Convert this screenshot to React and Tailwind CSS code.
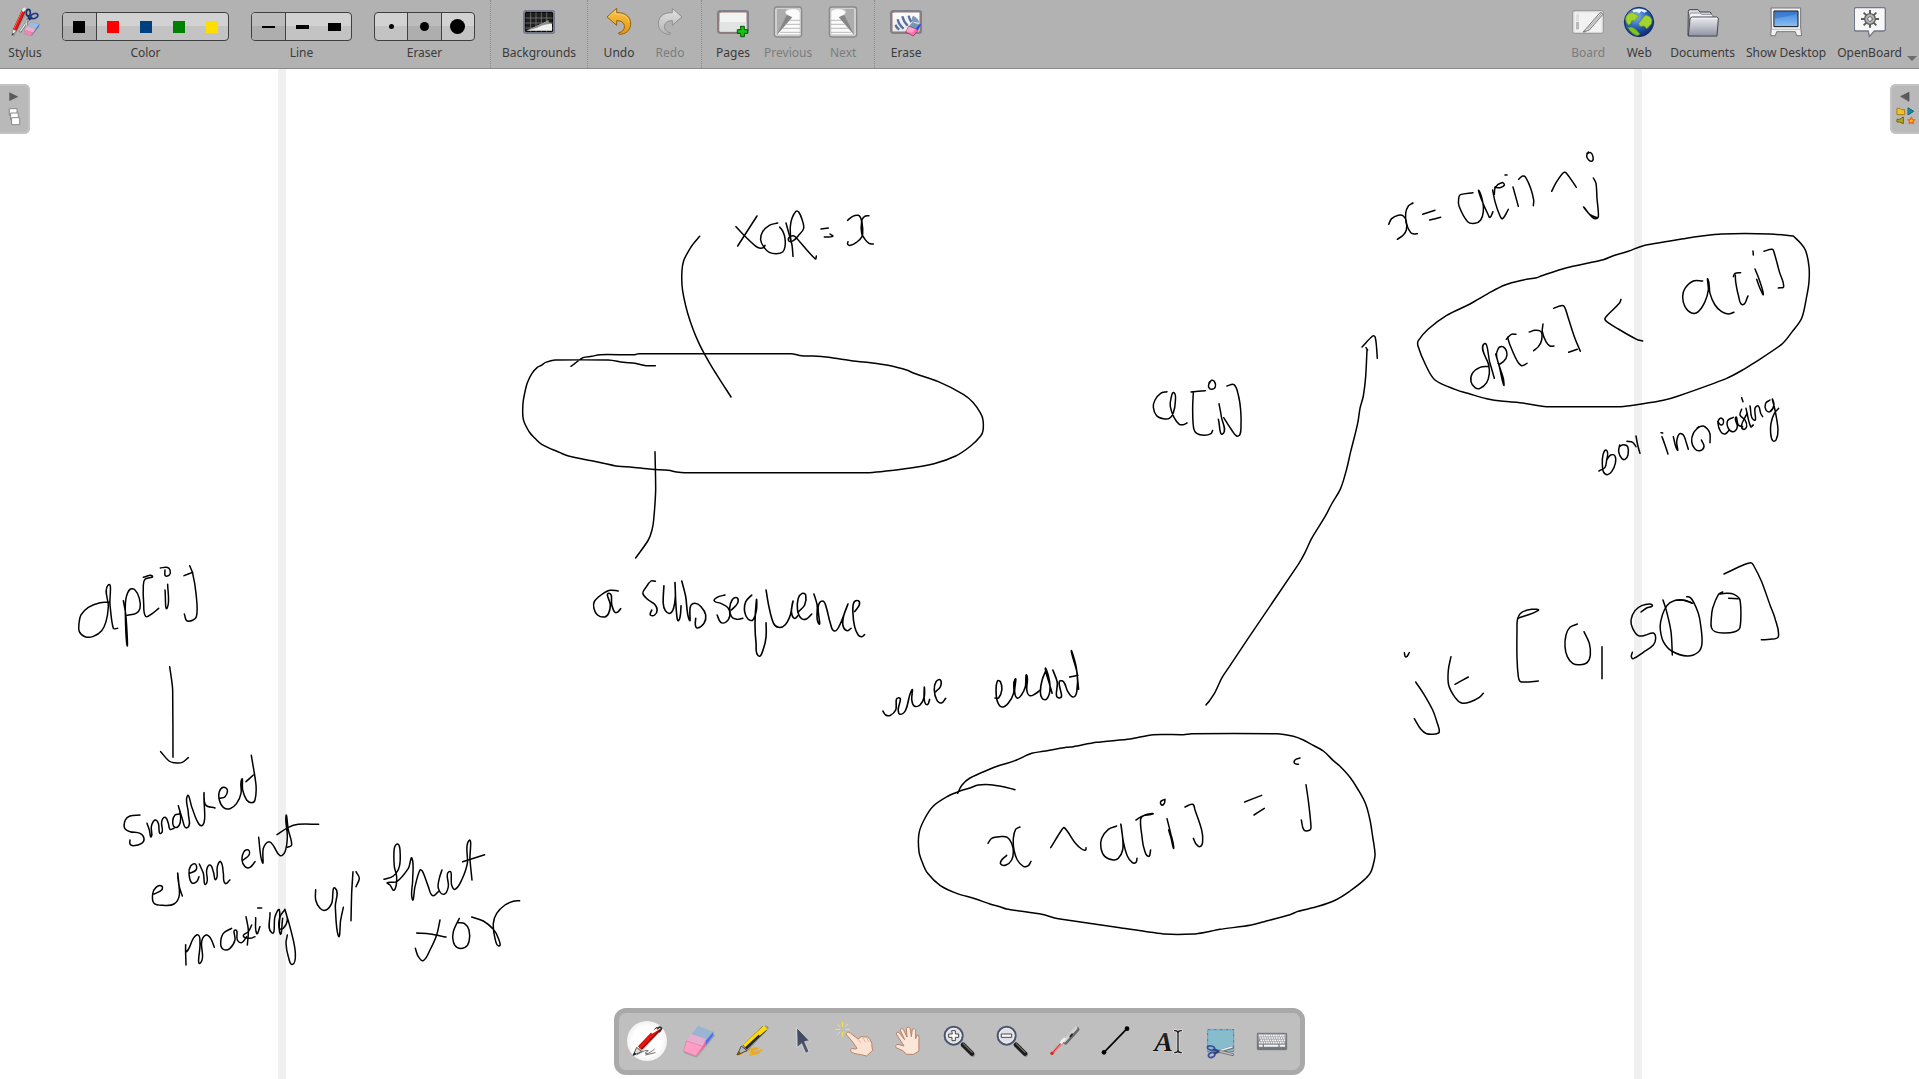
import React from "react";

/* ---------- toolbar icons ---------- */

function Icon({ box, size = "h-8 w-8", children }) {
  return (
    <svg viewBox={box} className={size + " shrink-0"} aria-hidden="true" fill="none" strokeLinejoin="round" strokeLinecap="round">
      {children}
    </svg>
  );
}

function Gradients() {
  const defs = [
    ["gold", "#f9c54a", "#e8940c"],
    ["silver", "#e2e2e2", "#b4b4b4"],
    ["paper", "#ffffff", "#e4e8e6"],
    ["folder", "#eceef2", "#9195a3"],
    ["screen", "#3d82d8", "#8cc0f5"],
    ["ink", "#333333", "#050505"],
    ["arrow", "#3c4258", "#505a76"],
    ["keys", "#a9abb2", "#6f7178"],
  ];
  return (
    <svg className="absolute h-0 w-0" aria-hidden="true">
      <defs>
        {defs.map(([id, a, b]) => (
          <linearGradient key={id} id={id} x1="0" y1="0" x2="0" y2="1">
            <stop offset="0" stopColor={a} />
            <stop offset="1" stopColor={b} />
          </linearGradient>
        ))}
        <radialGradient id="globe" cx="0.4" cy="0.3" r="0.75">
          <stop offset="0" stopColor="#8cb8f0" />
          <stop offset="0.5" stopColor="#2a62bd" />
          <stop offset="1" stopColor="#0a2566" />
        </radialGradient>
      </defs>
    </svg>
  );
}

const StylusIcon = () => (
  <Icon box="27 18 96 96">
    <path d="M40 106 L77 40" stroke="#8d8d8d" strokeWidth="7" opacity="0.6" />
    <path d="M45 89 L70 35" stroke="#8f1414" strokeWidth="12" />
    <path d="M45 88 L69 35" stroke="#e21a12" strokeWidth="9" />
    <path d="M43 84 L66 34" stroke="#ff8b7c" strokeWidth="2" />
    <path d="M70 31 l3 -4" stroke="#ececec" strokeWidth="8" />
    <path d="M36 105 L39 88 L49 92 Z" fill="#eeeeee" stroke="#777" strokeWidth="2" />
    <path d="M35 107 l3 -8 4 2 Z" fill="#222" />
    <path d="M62 94 L87 56" stroke="#666" strokeWidth="7" />
    <path d="M62 93 L87 56" stroke="#f0f0f0" strokeWidth="4" />
    <path d="M77 93 L82 58" stroke="#777" strokeWidth="6" />
    <path d="M77 92 L81 60" stroke="#dddddd" strokeWidth="3" />
    <ellipse cx="85" cy="38" rx="6" ry="10" stroke="#1c2e73" strokeWidth="5" />
    <ellipse cx="103" cy="48" rx="11" ry="7" stroke="#233b8a" strokeWidth="5" transform="rotate(-22 103 48)" />
    <path d="M85 48 L88 58 L95 54" stroke="#1c2e73" strokeWidth="6" />
    <path d="M91 68 L120 73 L96 109 L74 100 Z" fill="#828282" opacity="0.5" />
    <path d="M94 66 L118 72 L107 87 L83 79 Z" fill="#9dbde0" stroke="#7e9cc6" />
    <path d="M83 79 L107 87 L99 98 L75 91 Z" fill="#f3abcc" />
    <path d="M75 91 L99 98 L92 107 L73 101 Z" fill="#f285b6" stroke="#cf6696" />
    <path d="M107 87 L118 72 L117 80 L93 108 Z" fill="#4e78d6" />
  </Icon>
);

const BackgroundsIcon = () => (
  <Icon box="129 18 96 96">
    <rect x="131" y="32" width="93" height="68" rx="5" fill="#8b90a3" stroke="#6f7488" strokeWidth="3" />
    <rect x="136" y="37" width="82" height="58" rx="3" fill="#1e1e1e" stroke="#000" strokeWidth="3" />
    <path d="M137 54 H217 M137 69 H217 M137 84 H217 M152 38 V94 M168 38 V94 M184 38 V94 M200 38 V94" stroke="#8a8a8a" strokeWidth="2" />
    <path d="M139 92 Q160 84 176 75 Q194 69 205 61 Q202 70 216 71 V92 Z" fill="#f0f0f0" />
    <path d="M139 92 Q160 82 176 75 Q194 69 205 61 Q203 69 214 71 Q188 72 172 83 Z" fill="#8c8c8c" />
  </Icon>
);

const backArrow = "M376 50 L404 25 V38 C434 37 447 54 446 73 C445 91 431 103 412 103 L409 99 C423 95 429 87 427 76 C425 66 416 62 404 62 V75 Z";

const UndoIcon = () => (
  <Icon box="363 18 96 96">
    <path d={backArrow} fill="url(#gold)" stroke="#8f6214" strokeWidth="3" />
    <path d="M381 50 L401 32 V42 C425 41 438 50 441 66" stroke="#fbdc8a" strokeWidth="2" />
  </Icon>
);

const RedoIcon = () => (
  <Icon box="363 18 96 96">
    <g transform="translate(822 0) scale(-1 1)">
      <path d={backArrow} fill="url(#silver)" stroke="#8f8f8f" strokeWidth="3" />
    </g>
  </Icon>
);

const PagesIcon = () => (
  <Icon box="708 18 96 96">
    <rect x="710" y="32" width="93" height="68" rx="6" fill="#7f8496" stroke="#777b8c" strokeWidth="3" />
    <rect x="714" y="36" width="84" height="60" rx="4" fill="#f2f4f3" stroke="#a07468" strokeWidth="3" />
    <path d="M716 66 H796 V95 H716 Z" fill="#e2e4e3" />
    <path d="M779 79 h11 v10 h10 v11 h-10 v10 h-11 v-10 h-10 v-11 h10 Z" fill="#12c912" stroke="#054d05" strokeWidth="3" />
  </Icon>
);

const PageCurl = () => (
  <>
    <rect x="880" y="21" width="82" height="90" rx="8" fill="#d0d0d0" stroke="#8b8b8b" strokeWidth="4" />
    <path d="M888 27 H918 Q908 36 918 43 L933 52 L888 104 Z" fill="#adadad" />
    <path d="M918 30 Q938 22 952 30 Q958 32 957 40 V104 H888 L933 52 L917 44 Q908 36 918 30 Z" fill="#fbfbfb" stroke="#9f9f9f" strokeWidth="1" />
    <path d="M888 104 L917 45 L933 52 Z" fill="#868686" />
    <path d="M925 61 H956 M917 73 H956 M907 85 H956 M899 97 H956" stroke="#9a9a9a" strokeWidth="2" />
  </>
);

const PreviousIcon = () => (
  <Icon box="873 18 96 96">
    <PageCurl />
  </Icon>
);

const NextIcon = () => (
  <Icon box="873 18 96 96">
    <g transform="translate(1842 0) scale(-1 1)">
      <PageCurl />
    </g>
  </Icon>
);

const EraseIcon = () => (
  <Icon box="1227 18 96 96">
    <rect x="1229" y="32" width="93" height="68" rx="6" fill="#7f8496" stroke="#777b8c" strokeWidth="3" />
    <rect x="1233" y="36" width="84" height="60" rx="4" fill="url(#paper)" stroke="#a07468" strokeWidth="3" />
    <path d="M1244 74 Q1246 84 1255 88 M1250 58 Q1254 76 1268 86 M1264 49 Q1268 66 1280 77 M1283 47 Q1284 56 1291 66" stroke="#586f9f" strokeWidth="7" strokeLinecap="butt" />
    <path d="M1296 47 Q1312 54 1315 68 L1295 66 Q1289 58 1296 47 Z" fill="#8197bb" />
    <path d="M1294 69 L1320 72 L1299 104 L1280 100 Z" fill="#777" opacity="0.6" />
    <path d="M1294 66 L1313 75 L1304 87 L1284 79 Z" fill="#7098b8" />
    <path d="M1313 75 L1321 71 L1313 88 L1297 108 L1292 103 Z" fill="#234ee8" />
    <path d="M1284 79 L1306 87 L1312 90 L1297 108 L1275 97 Z" fill="#ff6daf" stroke="#8a315c" strokeWidth="2" />
    <path d="M1284 80 L1303 87 L1293 99 L1276 94 Z" fill="#ffa4ce" />
  </Icon>
);

const BoardIcon = () => (
  <Icon box="99 18 96 96">
    <rect x="101" y="32" width="92" height="68" rx="6" fill="#e5e5e5" stroke="#949494" strokeWidth="3" />
    <rect x="108" y="38" width="79" height="57" rx="2" fill="#f2f2f2" />
    <rect x="111" y="42" width="9" height="22" fill="#dedede" />
    <rect x="111" y="66" width="9" height="22" fill="#b8b8b8" />
    <path d="M137 96 L187 42" stroke="#999" strokeWidth="7" opacity="0.5" />
    <path d="M143 84 L183 38 Q190 36 191 44 L151 90 L133 96 Z" fill="#dcdcdc" stroke="#7b7b7b" strokeWidth="3" />
    <path d="M147 86 L186 42" stroke="#a8a8a8" strokeWidth="3" />
  </Icon>
);

const WebIcon = () => (
  <Icon box="252 18 96 96">
    <circle cx="300" cy="66" r="44" fill="url(#globe)" stroke="#12296b" strokeWidth="3" />
    <path d="M280 31 Q300 21 325 33 L316 38 L307 33 L301 40 L291 35 L284 38 Z" fill="#eef4ff" />
    <path d="M262 49 Q270 36 282 38 L292 44 L300 49 L293 54 L287 63 L279 61 L275 70 L269 76 L263 68 L260 58 Z" fill="#a3d42e" stroke="#5d9d1c" strokeWidth="2" />
    <path d="M313 52 L321 45 L333 50 L339 60 L337 72 L329 80 L323 86 L316 78 L302 79 L299 70 L306 62 Z" fill="#a3d42e" stroke="#5d9d1c" strokeWidth="2" />
    <path d="M266 82 L279 81 L290 88 L303 102 L295 107 Q277 103 266 82 Z" fill="#80c327" stroke="#4f8c1c" strokeWidth="2" />
  </Icon>
);

const DocumentsIcon = () => (
  <Icon box="441 18 96 96">
    <path d="M444 105 L445 34 Q445 29 450 29 H474 L480 36 H509 Q514 37 514 42 V100 Z" fill="#dddee2" stroke="#3d3f48" strokeWidth="3" />
    <path d="M448 104 L449 43 Q450 39 454 39 H479 L485 43 H514 Q519 44 519 49 V102 Z" fill="#f3f3f5" stroke="#60636e" strokeWidth="2" />
    <path d="M445 107 L450 57 Q451 51 458 51 H487 L497 51 H530 Q535 52 535 57 L531 107 Z" fill="url(#folder)" stroke="#44464f" strokeWidth="3" />
    <path d="M455 55 H531" stroke="#fff" strokeWidth="2" />
  </Icon>
);

const DesktopIcon = () => (
  <Icon box="690 18 96 96">
    <path d="M694 24 H782 V84 L785 107 H770 L766 95 H710 L706 107 H692 L694 84 Z" fill="#f2f2f2" stroke="#74767d" strokeWidth="3" />
    <rect x="703" y="33" width="71" height="47" fill="url(#screen)" stroke="#0e0e10" strokeWidth="3" />
    <path d="M704 56 Q738 50 773 42 V34 H704 Z" fill="#2b65c0" opacity="0.45" />
    <path d="M697 88 H780" stroke="#c7c8cc" strokeWidth="4" />
  </Icon>
);

const GearBubbleIcon = () => (
  <Icon box="939 18 96 96">
    <path d="M945 23 H1028 Q1033 23 1033 28 V88 Q1033 93 1028 93 H1000 L985 110 L982 93 H945 Q940 93 940 88 V28 Q940 23 945 23 Z" fill="#f7f7f7" stroke="#72778a" strokeWidth="4" />
    <g stroke="#5c5c5c" strokeWidth="6" strokeLinecap="butt">
      <path d="M987 30 V83 M960 57 H1014 M968 38 L1006 76 M1006 38 L968 76" />
    </g>
    <circle cx="987" cy="57" r="16" fill="#b5b5b5" stroke="#5c5c5c" strokeWidth="4" />
    <circle cx="987" cy="57" r="7" fill="#f1f1f1" stroke="#6a6a6a" strokeWidth="3" />
  </Icon>
);

/* ---------- floating palette icons ---------- */

const PenTool = () => (
  <>
    <path d="M84 164 Q112 147 118 152 Q99 163 118 160 Q134 150 136 148 M110 165 L138 158" stroke="#707070" strokeWidth="3" />
    <path d="M95 148 L152 87" stroke="#3f3f3f" strokeWidth="14" opacity="0.35" />
    <path d="M93 144 L149 86" stroke="#7d0b0b" strokeWidth="16" strokeLinecap="butt" />
    <path d="M92 143 L148 85" stroke="#e8130e" strokeWidth="11" strokeLinecap="butt" />
    <path d="M130 97 L150 85" stroke="#fff" strokeWidth="7" />
    <path d="M146 86 Q153 77 158 85 L152 95" stroke="#2c2c2c" strokeWidth="5" />
    <path d="M73 165 L83 142 L97 154 Z" fill="#d9d9d9" stroke="#555" strokeWidth="3" />
    <path d="M71 167 l5 -10 6 5 Z" fill="#111" />
  </>
);

const EraserTool = () => (
  <>
    <path d="M228 158 L262 170 L315 106" stroke="#777" strokeWidth="6" opacity="0.4" />
    <path d="M268 77 L313 95 L295 123 L247 102 Z" fill="#9bb4d1" />
    <path d="M313 95 L313 106 L291 135 L288 122 L295 116 Z" fill="#4774ea" />
    <path d="M247 102 L293 118 L281 139 L233 123 Z" fill="#e8aecf" />
    <path d="M281 139 L291 118 L290 136 L261 168 Z" fill="#f7609d" />
    <path d="M233 123 L281 139 L261 168 L225 154 Z" fill="#ff9dc4" stroke="#e277a2" strokeWidth="2" />
  </>
);

const HighlighterTool = () => (
  <>
    <path d="M390 164 Q432 140 447 145 Q413 157 431 158 Q452 154 458 151 M423 165 L450 159" stroke="#eda91f" strokeWidth="5" />
    <path d="M411 148 L471 84" stroke="#4b4b4b" strokeWidth="14" opacity="0.35" />
    <path d="M407 142 L467 85" stroke="#26282c" strokeWidth="18" strokeLinecap="butt" />
    <path d="M405 138 L468 80" stroke="#ffd90a" strokeWidth="10" strokeLinecap="butt" />
    <path d="M449 104 L472 84" stroke="#ffd90a" strokeWidth="9" strokeLinecap="butt" />
    <path d="M385 164 L397 138 L413 151 Z" fill="#b5b5b5" stroke="#4c4c4c" strokeWidth="3" />
    <path d="M382 165 l7 -12 8 9 Z" fill="#6b5310" />
  </>
);

const PointerTool = () => (
  <path d="M564 84 L601 122 L587 125 L600 155 L590 160 L578 131 L565 142 Z" fill="url(#arrow)" stroke="#e6e6e6" strokeWidth="2" />
);

const PlayTool = () => (
  <>
    <path d="M698 66 V81 M698 96 V110 M676 88 H690 M706 88 H720 M682 72 L690 80 M706 96 L713 103 M714 72 L706 80 M690 96 L682 104" stroke="#ffe733" strokeWidth="3" strokeLinecap="butt" />
    <path d="M709 99 Q714 92 721 99 L744 117 Q753 106 764 111 Q774 106 780 119 Q788 129 786 141 L788 151 L770 168 Q751 163 735 161 Q720 158 721 149 Q723 143 736 147 L741 145 L728 126 L710 105 Z" fill="#fbe2d3" stroke="#b58469" strokeWidth="3" />
    <path d="M744 117 L752 128 M759 114 L766 126 M771 115 L776 125" stroke="#cf9f84" strokeWidth="2" />
  </>
);

const HandTool = () => (
  <path d="M874 89 Q877 81 883 88 L894 111 L892 85 Q898 77 904 85 L907 110 L910 88 Q916 82 920 90 L920 116 L924 105 Q931 103 930 112 Q929 133 930 153 L914 163 L893 163 Q886 151 861 143 Q857 135 867 133 L885 138 L862 102 Q862 93 870 98 L886 118 Z" fill="#fbe6da" stroke="#b58469" strokeWidth="3" />
);

const Lens = ({ plus }) => (
  <>
    <path d="M42 136 L72 165" stroke="#777" strokeWidth="13" opacity="0.5" />
    <path d="M34 128 L42 136" stroke="#d5d5d5" strokeWidth="7" />
    <path d="M42 134 L69 161" stroke="#1d1d1d" strokeWidth="14" />
    <path d="M43 131 L69 157" stroke="#676767" strokeWidth="4" />
    <circle cx="14" cy="107" r="27" fill="#dfe1e6" stroke="#4c556f" strokeWidth="6" />
    <circle cx="14" cy="107" r="22" stroke="#f6f6f6" strokeWidth="2" />
    {plus ? (
      <path d="M9 92 h10 v10 h10 v10 h-10 v10 h-10 v-10 h-10 v-10 h10 Z" fill="#fff" stroke="#484848" strokeWidth="3" />
    ) : (
      <rect x="-1" y="102" width="30" height="10" fill="#fff" stroke="#484848" strokeWidth="3" />
    )}
  </>
);

const LaserTool = () => (
  <>
    <path d="M307 160 L344 120" stroke="#ef4136" strokeWidth="9" opacity="0.35" />
    <path d="M307 159 L336 126" stroke="#e32a20" strokeWidth="3" />
    <circle cx="306" cy="160" r="5" fill="#d6281f" />
    <path d="M346 126 L381 88" stroke="#696969" strokeWidth="15" />
    <path d="M343 123 L378 84" stroke="#d3d3d3" strokeWidth="9" />
    <path d="M334 127 L343 117" stroke="#efefef" strokeWidth="9" />
    <path d="M361 109 L366 103" stroke="#2b2b2b" strokeWidth="6" />
  </>
);

const LineTool = () => (
  <>
    <path d="M462 157 L531 86" stroke="#000" strokeWidth="5" />
    <circle cx="462" cy="157" r="7" fill="#000" />
    <circle cx="531" cy="86" r="7" fill="#000" />
  </>
);

const TextTool = () => (
  <>
    <text x="613" y="154" fontSize="84" fontWeight="bold" fontStyle="italic" fontFamily="Liberation Serif, serif" fill="url(#ink)" stroke="#e9e9e9" strokeWidth="2" paintOrder="stroke">A</text>
    <path d="M674 92 Q683 91 684 99 Q685 91 694 92 M684 97 V151 M674 158 Q684 158 684 151 Q685 158 694 158" stroke="#e9e9e9" strokeWidth="8" />
    <path d="M674 92 Q683 91 684 99 Q685 91 694 92 M684 97 V151 M674 158 Q684 158 684 151 Q685 158 694 158" stroke="#161616" strokeWidth="4" />
  </>
);

const CaptureTool = () => (
  <>
    <rect x="773" y="89" width="78" height="66" fill="#86bccc" stroke="#2a7ceb" strokeWidth="3" strokeDasharray="9 3 3 3" strokeLinecap="butt" />
    <path d="M796 158 L847 142" stroke="#6e6e6e" strokeWidth="9" />
    <path d="M797 156 L846 141" stroke="#ececec" strokeWidth="5" />
    <path d="M796 151 L848 164" stroke="#6e6e6e" strokeWidth="8" />
    <path d="M797 151 L847 163" stroke="#c5c5c5" strokeWidth="4" />
    <ellipse cx="783" cy="144" rx="11" ry="6" stroke="#3d4f9b" strokeWidth="5" transform="rotate(12 783 144)" />
    <ellipse cx="785" cy="165" rx="10" ry="7" stroke="#3d4f9b" strokeWidth="5" transform="rotate(-24 785 165)" />
    <path d="M793 148 L806 154 L794 160" stroke="#2f407f" strokeWidth="6" />
  </>
);

const KeyboardTool = () => (
  <>
    <rect x="922" y="100" width="88" height="49" rx="2" fill="url(#keys)" stroke="#70727a" strokeWidth="3" />
    <path d="M927 107 H1005 M929 114 H1005 M931 121 H1005 M927 128 H1005" stroke="#f6f6f6" strokeWidth="5" strokeDasharray="5 2" strokeLinecap="butt" />
    <path d="M927 137 H938 M942 137 H985 M989 137 H1005" stroke="#f6f6f6" strokeWidth="6" strokeLinecap="butt" />
  </>
);

const palette = [
  { name: "Pen", box: "54 63 120 120", draw: <PenTool />, active: true },
  { name: "Eraser", box: "210 63 120 120", draw: <EraserTool /> },
  { name: "Highlighter", box: "366 63 120 120", draw: <HighlighterTool /> },
  { name: "Select", box: "522 63 120 120", draw: <PointerTool /> },
  { name: "Interact", box: "675 63 120 120", draw: <PlayTool /> },
  { name: "Scroll page", box: "834 63 120 120", draw: <HandTool /> },
  { name: "Zoom in", box: "-30 63 120 120", draw: <Lens plus /> },
  { name: "Zoom out", box: "-30 63 120 120", draw: <Lens /> },
  { name: "Laser pointer", box: "282 63 120 120", draw: <LaserTool /> },
  { name: "Draw line", box: "438 63 120 120", draw: <LineTool /> },
  { name: "Write text", box: "594 63 120 120", draw: <TextTool /> },
  { name: "Capture", box: "750 63 120 120", draw: <CaptureTool /> },
  { name: "Virtual keyboard", box: "906 63 120 120", draw: <KeyboardTool /> },
];

/* ---------- top bar parts ---------- */

function ToolButton({ label, icon, disabled }) {
  return (
    <button
      type="button"
      disabled={disabled}
      className={"flex min-w-10 flex-col items-center gap-[7px] pt-1.5 leading-4 whitespace-nowrap " + (disabled ? "text-[#7c7c7c]" : "text-[#3a3a3a]")}
    >
      {icon}
      <span>{label}</span>
    </button>
  );
}

const Separator = () => <div className="h-full w-px border-l border-dotted border-[#8c8c8c]" />;

const lightFace = "bg-linear-to-b from-[#d2d2d2] from-50% to-[#c3c3c3] to-50%";
const darkFace = "bg-linear-to-b from-[#bcbcbc] from-50% to-[#aeaeae] to-50%";

function Segmented({ label, width, items, selected }) {
  return (
    <div className="flex flex-col items-center gap-1 pt-3 leading-4" role="group" aria-label={label}>
      <div className={"flex h-[29px] overflow-hidden rounded-sm border border-[#404040] " + width + " " + lightFace}>
        {items.map((item, i) => (
          <button
            key={item.name}
            type="button"
            aria-label={item.name}
            aria-pressed={i === selected}
            className={
              "flex flex-1 items-center justify-center border-[#404040] " +
              (i === selected ? darkFace + " border-r " + (i > 0 ? "border-l" : "") : "")
            }
          >
            <span className={item.look} />
          </button>
        ))}
      </div>
      <span className="text-[#3a3a3a]">{label}</span>
    </div>
  );
}

const colors = [
  { name: "Black", look: "h-3 w-3 bg-black" },
  { name: "Red", look: "h-3 w-3 bg-[#ff0000]" },
  { name: "Blue", look: "h-3 w-3 bg-[#004080]" },
  { name: "Green", look: "h-3 w-3 bg-[#008000]" },
  { name: "Yellow", look: "h-3 w-3 bg-[#ffdd00]" },
];
const lines = [
  { name: "Thin line", look: "h-0.5 w-[13px] bg-black" },
  { name: "Medium line", look: "h-1 w-[13px] bg-black" },
  { name: "Thick line", look: "h-2 w-[13px] bg-black" },
];
const erasers = [
  { name: "Small eraser", look: "h-[5px] w-[5px] rounded-full bg-black" },
  { name: "Medium eraser", look: "h-[9px] w-[9px] rounded-full bg-black" },
  { name: "Large eraser", look: "h-[15px] w-[15px] rounded-full bg-black" },
];

/* ---------- board ink ---------- */

// Each note holds freehand strokes as point lists in its own local units.
const notes = [
  {
    name: "XOR = x",
    at: "translate(500 190) scale(0.33333)",
    strokes: [
      "599,139 578,164 560,193 551,212 546,240 546,285 551,320 563,370 580,420 597,460 614,493 640,538 693,621",
      "213,529 224,521 249,503 275,499 300,494 405,494 416,491 872,491 905,497 940,498 985,502 1060,513 1100,517 1175,528 1222,541 1240,549 1315,575 1390,613 1420,638 1442,670 1449,690 1449,722 1442,738 1412,768 1367,798 1302,821 1215,836 1100,848 555,848 530,846 505,841 455,838 390,831 355,829 275,812 208,799 180,788 125,763 105,745 88,726 70,688 69,640 75,605 82,578 96,550 112,532 124,526 137,517 165,510 325,510 370,517 405,520 438,527 466,527",
      "708,110 735,139 765,167 778,174 792,172 795,166",
      "771,78 713,168",
      "833,99 808,106 788,125 782,150 792,172 808,187 830,191 848,186 855,170 855,145 849,125 839,111",
      "858,99 868,135 876,165 879,199",
      "872,150 871,110 876,85 888,64 896,66 906,88 911,115 895,137 880,152 868,154 866,144 880,137 892,147 946,207 949,198",
      "963,117 985,114",
      "973,141 998,139 990,132",
      "1043,91 1058,79 1075,76 1083,86 1088,115 1086,140 1068,158 1052,166 1043,163 1044,155",
      "1107,77 1093,80 1085,93 1085,130 1095,148 1107,160 1120,162",
      "465,785 467,900 461,990 456,1020 445,1050 407,1104",
    ],
  },
  {
    name: "x = a[i] ^ j, dp[x] < a[i], for increasing",
    at: "translate(1340 130) scale(0.33333)",
    strokes: [
      "146,283 155,266 175,256 190,258 199,275 199,300 190,315 172,328",
      "219,219 205,228 197,250 199,280 212,308 222,312 232,311",
      "248,253 285,241",
      "269,270 302,262",
      "399,188 361,194 356,205 357,228 383,275 405,280 422,270 430,245 428,215 417,182 425,210 445,255 450,262 459,245",
      "463,193 466,172 485,158 493,165 480,173 464,172",
      "458,180 465,215 480,258 488,266 505,238",
      "519,171 535,229",
      "495,135 501,135",
      "536,148 548,138 557,142 572,175 581,210 580,227",
      "635,184 650,155 670,128 678,128 709,172",
      "745,66 740,78 746,90 757,93 759,80 752,68 741,70",
      "760,144 768,160 771,205 775,248 773,264 757,262 732,232 750,254 773,264",
      "1360,318 1290,312 1145,312 1080,319 1040,325 910,347 865,364 820,377 790,389 680,413 605,437 590,443 550,450 495,465 445,490 390,522 320,556 265,597 235,632 234,648 257,705 285,750 345,778 390,792 440,806 490,814 540,818 620,830 842,830 905,822 970,811 1015,798 1160,745 1215,716 1245,697 1325,643 1355,607 1385,565 1400,500 1407,455 1407,410 1397,362 1382,340 1360,318",
      "445,709 420,712 397,730 393,755 405,773 420,775 440,758 448,730 446,705 431,643 450,700 463,745",
      "467,672 478,710 491,765 490,745 470,680 475,655 488,650 500,665 498,685 480,702 474,700",
      "499,628 514,613 528,613",
      "503,622 508,640 530,690 545,707 561,700",
      "568,606 585,601 603,605 605,630 595,650 581,662",
      "609,582 607,605 618,635 630,648 642,648",
      "641,535 663,527 673,530 685,565 703,620 721,664",
      "686,667 712,658",
      "843,508 838,520 797,562 797,572 835,597 890,628 908,633",
      "1088,453 1060,453 1035,475 1028,500 1035,530 1055,549 1075,545 1095,515 1105,480 1104,448 1110,490 1125,525 1145,545 1165,552 1182,547",
      "1180,440 1185,430 1202,428",
      "1186,435 1187,455 1195,495 1208,524 1224,498",
      "1245,417 1258,450 1270,493 1260,475 1250,448",
      "1239,363 1240,375",
      "1272,364 1297,358 1303,370 1318,425 1331,470 1315,474",
      "777,1023 795,1012 800,990 803,970 797,960 789,975 787,1000 790,1025 802,1034 815,1025 826,1000 825,978 812,975 800,990",
      "839,945 836,965 845,985 855,988 864,975 863,950 850,944 838,950",
      "861,934 878,937 888,950",
      "888,918 893,945 900,970",
      "966,920 975,945 984,972",
      "963,908 968,909",
      "1000,920 1012,960 1010,935 1018,912 1030,915 1038,935 1045,958",
      "1077,890 1060,910 1055,935 1065,957 1080,962 1092,950 1084,930",
      "1072,893 1090,888 1103,898 1110,912 1110,938",
      "1133,875 1145,885 1150,870 1140,865 1134,880 1142,905 1155,912 1168,900",
      "1180,862 1163,872 1165,895 1180,905 1192,890 1187,862 1195,885 1208,890",
      "1205,838 1200,855 1215,870 1220,890 1210,898 1205,885 1215,862 1222,850",
      "1218,835 1232,890 1240,885",
      "1205,803 1209,815",
      "1230,828 1242,870 1245,835 1255,828 1262,850 1268,860",
      "1290,810 1277,820 1278,840 1290,845 1302,825 1297,808 1305,840 1314,900 1308,930 1298,932 1292,910 1293,880 1303,850 1316,835",
    ],
  },
  {
    name: "a[i]",
    at: "translate(1130 320) scale(0.33333)",
    strokes: [
      "111,215 92,220 75,240 70,262 80,287 100,296 118,295 130,278 136,245 132,218 123,235 121,260 132,292 148,313 160,314 171,309",
      "183,216 226,212",
      "190,215 188,270 191,325 200,340 222,346 243,341 248,331",
      "267,251 274,290 279,341 265,298",
      "281,293 305,330 320,348 330,343 333,320 332,270 325,225 312,194 291,198",
      "238,186 236,202 247,208 256,200 254,186 245,181 238,190",
      "228,1155 238,1143 255,1117 276,1073 300,1037 360,947 505,733 525,698 545,655 585,590 605,552 632,505 650,447 662,395 676,340 684,305 690,265 700,228 707,170 711,90",
      "696,81 728,48 735,50 739,75 742,115",
      "708,83 713,90",
    ],
  },
  {
    name: "j in [0, 500]",
    at: "translate(1380 540) scale(0.33333)",
    strokes: [
      "73,338 78,351 88,338",
      "107,426 130,460 158,510 172,550 178,575 170,581 140,581 122,567 103,536",
      "213,350 205,390 206,435 225,472 245,489 270,486 298,472 310,460",
      "225,433 265,411",
      "414,235 475,211 455,208 425,217 413,235 411,270 411,355 415,410 420,424 435,426 475,423",
      "592,252 570,262 558,285 555,320 562,350 578,370 600,374 622,367 631,345 628,310 612,275",
      "666,320 666,416",
      "783,216 800,204 817,198 810,192 785,197 765,212 753,240 758,265 775,287 795,286 820,279 827,295 820,315 790,337 760,356 754,350 757,337",
      "888,181 915,181 938,190",
      "935,188 900,179 870,188 853,210 842,245 841,270 850,305 875,333 922,348 955,336 966,310 962,255 955,220 940,185 930,172 920,170",
      "849,180 860,215 873,275 877,345",
      "1028,156 1015,164 998,205 994,235 994,262 1005,275 1030,279 1062,276 1080,262 1080,180 1062,163 1040,160 1018,162",
      "1046,175 1075,176",
      "1032,102 1090,75 1113,68 1120,75 1145,125 1170,195 1185,235 1195,290 1170,298 1144,299",
    ],
  },
  {
    name: "x ^ a[i] = j",
    at: "translate(900 700) scale(0.33333)",
    strokes: [
      "173,280 186,255 210,234 270,207 300,196 345,182 395,160 430,154 500,142 520,140 590,127 690,117 760,104 850,104 875,101 1130,101 1180,109 1210,120 1230,131 1270,153 1300,182 1320,199 1350,232 1375,270 1397,312 1410,360 1418,410 1425,460 1423,480 1412,517 1390,542 1350,573 1307,600 1255,619 1195,634 1170,644 1085,667 1050,676 960,688 925,695 880,702 795,702 660,683 475,656 425,643 320,627 300,620 270,612 225,596 170,580 120,556 83,520 68,490 57,455 57,400 72,360 98,320 145,288 178,274 210,264 235,255 270,254 310,260 345,269",
      "264,430 275,415 300,410 322,412 335,430 340,455 335,480 318,495 302,492 305,480 320,466",
      "360,381 347,388 340,415 342,450 352,480 370,499 385,497 393,484",
      "452,443 485,390 493,383 525,428 545,447 557,450 558,443",
      "650,378 625,388 605,415 603,445 615,470 640,480 655,475 668,450 668,415 663,375 670,425 682,468 697,488 708,487 711,475",
      "708,360 730,347 758,342 735,345 722,357 726,410 732,445 745,469 752,450",
      "801,356 812,400 821,443 812,410 806,390",
      "792,299 782,305 785,315 793,310 795,298",
      "855,321 878,313 885,330 905,390 908,425 900,440 888,432 880,415",
      "1034,306 1085,286",
      "1062,345 1093,325",
      "1200,174 1185,180 1184,190 1195,193",
      "1218,254 1226,310 1233,380 1230,390 1212,390 1204,360",
    ],
  },
  {
    name: "a subsequence, we want",
    at: "translate(560 540) scale(0.35714 0.33333)",
    strokes: [
      "163,153 140,151 115,165 96,185 95,205 105,225 125,231 136,220 141,195 137,160 145,195 152,215 160,217 170,206",
      "267,124 255,123 240,143 232,160 245,178 265,193 272,210 265,225 253,225 257,210",
      "291,137 289,190 295,212 308,220 318,205 323,170 322,130 324,185 328,235 332,242 337,225 339,197",
      "341,123 352,170 362,240 365,200 378,190 395,200 408,225 403,250 385,264 379,255 380,235",
      "462,165 440,172 432,183 450,190 470,203 476,225 465,246 450,247 440,225",
      "480,210 497,190 495,173 482,180 475,205 480,230 495,238 512,235",
      "537,165 520,185 517,215 527,238 540,240 550,210 550,180 546,250 549,310 556,348 570,325 577,290 577,248",
      "577,150 585,200 598,250 612,262 630,255 645,225 652,185 648,215 656,235 668,225",
      "668,215 685,195 688,165 678,160 667,175 665,210 675,235 690,237 705,222",
      "711,162 720,195 724,250 723,200 735,183 745,200 757,250 768,273 782,258 800,210 806,193 795,225 792,255 803,272 815,265",
      "825,215 838,195 835,182 823,187 820,215 825,260 835,285 845,290 853,284",
      "904,513 912,525 925,526 940,510 948,473 947,510 952,523 968,510 985,450 985,480 992,498 1008,495 1020,470 1020,443 1020,480 1028,494 1035,478",
      "1052,455 1065,440 1065,420 1053,425 1048,450 1055,480 1068,489 1080,475",
      "1218,474 1228,474 1237,450 1233,425 1225,423 1221,450 1225,485 1238,501 1255,490 1270,460 1274,418 1273,455 1280,474 1292,465 1303,440 1307,406 1307,450 1315,467 1330,462 1345,450",
      "1362,388 1350,420 1345,455 1350,475 1362,478 1372,450 1368,410 1359,386 1370,430 1378,460",
      "1380,390 1392,425 1398,474 1398,425 1410,425 1422,455 1437,471 1447,455 1448,400 1432,335 1445,380 1452,448",
      "1427,411 1450,406",
    ],
  },
  {
    name: "dp[i]: smallest element making up that xor",
    at: "translate(50 540) scale(0.33333)",
    strokes: [
      "178,187 150,188 115,202 93,225 87,250 88,275 105,290 130,289 155,272 168,245 175,200 174,136 180,195 190,265 203,265",
      "220,182 228,230 231,315 226,220 228,175 240,148 255,150 268,175 270,205 258,220 232,226",
      "280,112 307,108 285,118 280,135 281,190 287,229 305,222 326,205",
      "345,150 352,203 353,133",
      "331,84 350,82 360,90 358,105 346,107 345,90",
      "419,77 428,100 438,160 439,230 412,243 403,222",
      "402,107 428,97",
      "359,380 368,450 369,652",
      "332,635 357,663 372,668 395,668 415,653",
      "270,825 240,828 226,840 224,865 240,875 270,880 282,895 275,910 250,917 240,912 240,900",
      "291,850 298,870 304,890 304,860 315,840 325,850 333,880 335,845 345,832 355,850 360,868 372,865",
      "388,822 375,825 368,845 375,862 388,855 392,835 390,815",
      "385,797 395,830 412,863 415,820 412,768 425,800 440,840 455,857 464,835 462,760 467,795 495,804",
      "508,775 525,770 532,750 520,742 508,755 508,780 520,802 540,806 560,790 573,760 575,718 578,750 590,780 605,788 615,780 618,735 604,646",
      "588,725 610,705",
      "312,1062 335,1050 335,1038 318,1042 308,1062 312,1090 340,1096 372,1092 388,1065 383,1002 388,1040 397,1068",
      "418,1000 438,990 436,972 422,978 417,1000 425,1028 440,1025 447,1010",
      "448,972 460,1000 468,1032 470,990 480,975 490,995 498,1018 502,980 512,965 520,1000 525,1030 540,1020",
      "580,960 597,945 595,930 582,935 576,960 585,980 600,982 615,965",
      "626,892 637,967 640,925 657,905 672,920 690,947 705,935 712,890 708,828 715,870 725,915 712,922",
      "681,884 715,862 745,853 806,853",
      "408,1275 407,1215 410,1235 430,1195 445,1185 450,1210 452,1268 455,1205 468,1185 482,1195 493,1222",
      "545,1165 520,1180 512,1210 520,1228 540,1225 555,1200 556,1170 562,1200 575,1208 590,1190",
      "588,1130 595,1170 592,1215",
      "605,1155 595,1175 580,1188 600,1195 615,1190",
      "617,1133 620,1180 630,1160",
      "623,1104 635,1104",
      "660,1118 665,1178 675,1130 688,1110 690,1180 698,1135",
      "705,1108 690,1130 688,1165 700,1165 712,1140 705,1110 725,1180 736,1240 728,1273 715,1250 708,1210 712,1185",
      "797,1049 797,1080 810,1105 828,1110 845,1090 856,1045 856,1100 865,1187 872,1140 880,1102",
      "909,995 905,1060 903,1142",
      "918,995 928,1015 918,1040",
      "1002,1018 1030,1008 1048,980 1050,930 1043,912 1033,925 1033,980 1040,1010 1033,1050 1020,1035 1012,1028 1040,1025 1075,985 1086,955 1088,1020 1087,1078 1095,1040 1110,990 1118,995 1135,1040 1148,1067 1165,1055",
      "1176,990 1168,1015 1165,1045 1182,1063 1195,1040 1197,995 1205,1035 1215,1048 1235,1020 1252,970 1256,903 1260,960 1266,1020",
      "1238,965 1304,944",
      "1100,1179 1140,1182 1188,1191",
      "1170,1140 1160,1185 1140,1230 1120,1262 1105,1250 1096,1225",
      "1228,1135 1210,1175 1210,1205 1222,1223 1245,1222 1257,1205 1257,1170 1243,1150 1225,1148",
      "1265,1131 1300,1143 1330,1168 1345,1195 1347,1218 1335,1195 1330,1150 1340,1120 1365,1095 1390,1084 1409,1082",
    ],
  },
];

// Joins the points with cubic segments whose handles stay within a third of each segment.
function smooth(points) {
  const p = points.split(" ").map((s) => s.split(",").map(Number));
  const dir = p.map((_, i) => {
    const a = p[Math.max(0, i - 1)];
    const b = p[Math.min(p.length - 1, i + 1)];
    const len = Math.hypot(b[0] - a[0], b[1] - a[1]) || 1;
    return [(b[0] - a[0]) / len, (b[1] - a[1]) / len];
  });
  let d = "M" + p[0].join(" ");
  for (let i = 1; i < p.length; i++) {
    const [a, b] = [p[i - 1], p[i]];
    const gap = Math.hypot(b[0] - a[0], b[1] - a[1]);
    const h = Math.min(gap / 3, 20);
    const c = [a[0] + dir[i - 1][0] * h, a[1] + dir[i - 1][1] * h, b[0] - dir[i][0] * h, b[1] - dir[i][1] * h, b[0], b[1]];
    d += "C" + c.map((n) => n.toFixed(1)).join(" ");
  }
  return d;
}

function Board() {
  return (
    <svg viewBox="0 69 1919 1010" preserveAspectRatio="xMidYMid slice" className="absolute inset-0 h-full w-full" role="img" aria-label="Board page">
      <rect x="278" y="69" width="8" height="1010" fill="#f0f0f0" />
      <rect x="1634" y="69" width="8" height="1010" fill="#f0f0f0" />
      <g fill="none" stroke="#000" strokeWidth="4.5" strokeLinecap="round" strokeLinejoin="round">
        {notes.map((note) => (
          <g key={note.name} transform={note.at} aria-label={note.name}>
            {note.strokes.map((s, i) => (
              <path key={i} d={smooth(s)} />
            ))}
          </g>
        ))}
      </g>
    </svg>
  );
}

/* ---------- page ---------- */

export default function App() {
  return (
    <div className="flex h-screen flex-col overflow-hidden bg-white font-['Noto_Sans','Open_Sans',sans-serif] text-xs">
      <Gradients />
      <header className="flex h-[69px] shrink-0 items-start justify-between border-b border-[#8a8a8a] bg-[#b2b2b2]">
        <div className="flex h-full items-start gap-[11px] pl-[5px]">
          <ToolButton label="Stylus" icon={<StylusIcon />} />
          <div className="flex gap-[22px] pr-1 pl-1.5">
            <Segmented label="Color" width="w-[167px]" items={colors} selected={0} />
            <Segmented label="Line" width="w-[101px]" items={lines} selected={0} />
            <Segmented label="Eraser" width="w-[101px]" items={erasers} selected={1} />
          </div>
          <Separator />
          <ToolButton label="Backgrounds" icon={<BackgroundsIcon />} />
          <Separator />
          <ToolButton label="Undo" icon={<UndoIcon />} />
          <ToolButton label="Redo" icon={<RedoIcon />} disabled />
          <Separator />
          <ToolButton label="Pages" icon={<PagesIcon />} />
          <ToolButton label="Previous" icon={<PreviousIcon />} disabled />
          <ToolButton label="Next" icon={<NextIcon />} disabled />
          <Separator />
          <ToolButton label="Erase" icon={<EraseIcon />} />
        </div>
        <div className="flex h-full items-start gap-[11px]">
          <ToolButton label="Board" icon={<BoardIcon />} disabled />
          <ToolButton label="Web" icon={<WebIcon />} />
          <ToolButton label="Documents" icon={<DocumentsIcon />} />
          <ToolButton label="Show Desktop" icon={<DesktopIcon />} />
          <div className="flex h-full items-end gap-[5px] pr-0.5">
            <div className="h-full">
              <ToolButton label="OpenBoard" icon={<GearBubbleIcon />} />
            </div>
            <button type="button" aria-label="OpenBoard menu" className="pb-[7px]">
              <svg viewBox="0 0 10 5" className="h-[5px] w-2.5" aria-hidden="true">
                <path d="M0 0 H10 L5 5 Z" fill="#6b6b6b" />
              </svg>
            </button>
          </div>
        </div>
      </header>

      <main className="relative flex-1">
        <Board />

        <button type="button" aria-label="Show pages" className="absolute top-[15px] left-0 rounded-r-md bg-[#b9b9b9] shadow-[inset_-2px_0_0_#c3c3c3,inset_0_2px_0_#c3c3c3,inset_0_-2px_0_#c3c3c3]">
          <Icon box="0 252 90 150" size="h-[50px] w-[30px]">
            <path d="M28 277 L55 290 L28 303 Z" fill="#5b5b5b" />
            <g fill="#fff" stroke="#8a8a8a" strokeWidth="3">
              <rect x="29" y="326" width="22" height="20" />
              <rect x="33" y="339" width="22" height="20" />
              <rect x="36" y="353" width="23" height="21" />
            </g>
          </Icon>
        </button>

        <button type="button" aria-label="Show library" className="absolute top-[15px] right-0 rounded-l-md bg-[#b9b9b9] shadow-[inset_2px_0_0_#c3c3c3,inset_0_2px_0_#c3c3c3,inset_0_-2px_0_#c3c3c3]">
          <Icon box="1050 252 87 150" size="h-[50px] w-[29px]">
            <path d="M1083 289 L1107 277 V303 Z" fill="#5b5b5b" stroke="#4a4a4a" strokeWidth="2" />
            <path d="M1072 325 h8 l4 4 h10 v15 h-22 Z" fill="#f0c22d" stroke="#ab7d14" strokeWidth="3" />
            <path d="M1105 324 L1121 334 L1105 344 Z" fill="#1488ad" stroke="#08607d" strokeWidth="3" />
            <path d="M1072 358 h7 L1090 351 V371 L1079 366 h-7 Z" fill="#b4a520" stroke="#6f650e" strokeWidth="3" />
            <path d="M1114 352 l3 6 7 1 -5 5 1 7 -6 -3 -6 3 1 -7 -5 -5 7 -1 Z" fill="#ffb43a" stroke="#ea6d12" strokeWidth="4" />
          </Icon>
        </button>

        <div className="absolute inset-x-0 bottom-1 flex justify-center">
          <div className="flex h-[67px] w-[691px] items-center justify-between rounded-xl border-5 border-[#a9a9a9] bg-[#bfbfbf] px-2 pb-px" role="toolbar" aria-label="Drawing tools">
            {palette.map((tool) => (
              <button
                key={tool.name}
                type="button"
                aria-label={tool.name}
                aria-pressed={Boolean(tool.active)}
                className={"h-10 w-10 rounded-full " + (tool.active ? "bg-radial from-white from-50% to-[#dedede]" : "")}
              >
                <Icon box={tool.box} size="h-10 w-10">
                  {tool.draw}
                </Icon>
              </button>
            ))}
          </div>
        </div>
      </main>
    </div>
  );
}
